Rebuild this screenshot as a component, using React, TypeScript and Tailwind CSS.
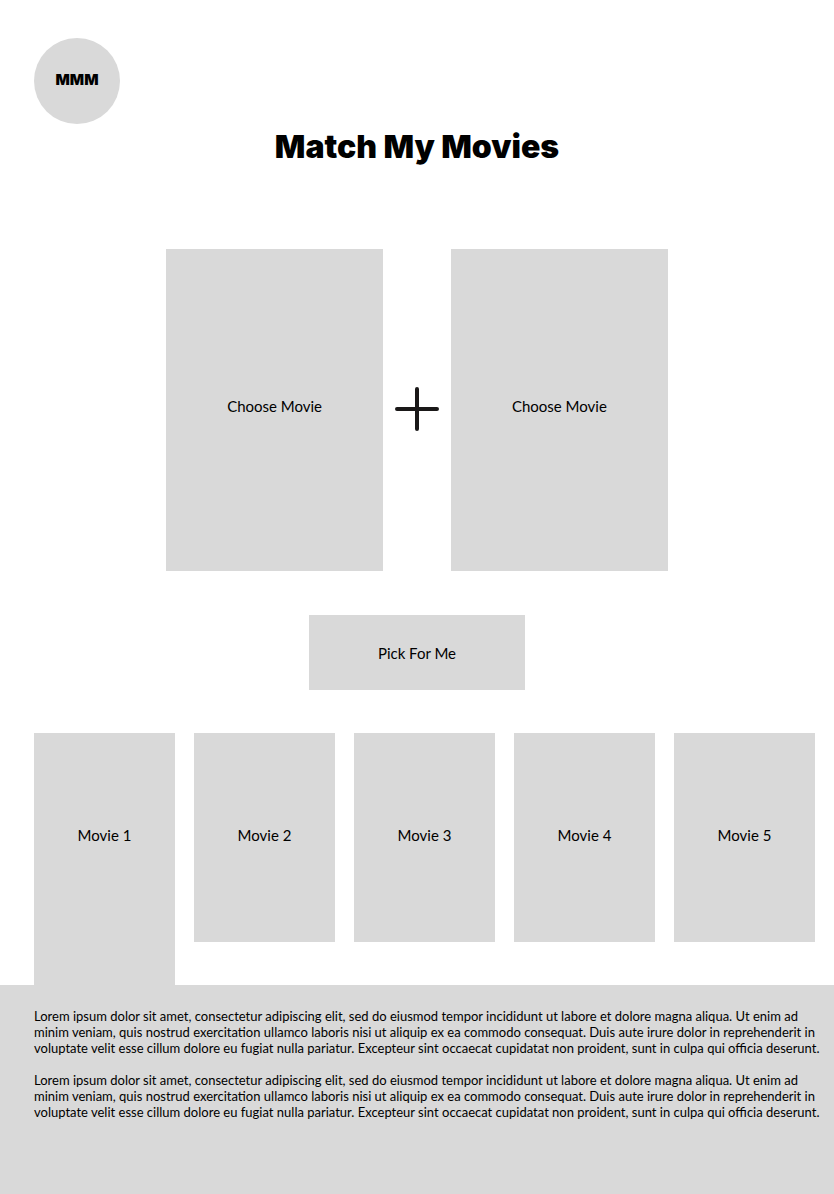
const movies = ["Movie 1", "Movie 2", "Movie 3", "Movie 4", "Movie 5"];

const blurb =
  "Lorem ipsum dolor sit amet, consectetur adipiscing elit, sed do eiusmod tempor incididunt ut labore et dolore magna aliqua. Ut enim ad minim veniam, quis nostrud exercitation ullamco laboris nisi ut aliquip ex ea commodo consequat. Duis aute irure dolor in reprehenderit in voluptate velit esse cillum dolore eu fugiat nulla pariatur. Excepteur sint occaecat cupidatat non proident, sunt in culpa qui officia deserunt.";

function ChooseCard() {
  return (
    <button
      type="button"
      className="flex h-[322px] w-[26%] items-center justify-center bg-[#d9d9d9] pb-2 text-[15px] leading-5"
    >
      Choose Movie
    </button>
  );
}

export default function App() {
  return (
    <div className="flex min-h-screen flex-col bg-white font-['Lato',sans-serif] text-black">
      <header className="flex flex-col pt-[38px] font-['Inter',sans-serif] font-black">
        <a
          href="#"
          className="ml-[34px] flex size-[86px] items-center justify-center rounded-full bg-[#d9d9d9] pb-0.5 text-[15px]"
        >
          MMM
        </a>
        <h1 className="text-center text-[32px] leading-[46px]">Match My Movies</h1>
      </header>

      <main className="flex grow flex-col">
        <section className="mt-[79px] flex items-center justify-center">
          <ChooseCard />
          <svg className="mx-3 mb-0.5 size-11 shrink-0" viewBox="0 0 44 44" fill="none" aria-hidden="true">
            <path d="M22 2v40M2 22h40" stroke="#1a1818" strokeWidth="4" strokeLinecap="round" />
          </svg>
          <ChooseCard />
        </section>

        <button
          type="button"
          className="mt-11 h-[75px] w-[26%] self-center bg-[#d9d9d9] text-[15px] leading-5"
        >
          Pick For Me
        </button>

        <ul className="mt-[43px] grid grow grid-cols-5 items-start gap-[19px] pr-[19px] pl-[34px] text-[15px] leading-5">
          {movies.map((movie) => (
            <li key={movie} className="h-[209px] bg-[#d9d9d9] pt-[92px] text-center first:h-[252px]">
              {movie}
            </li>
          ))}
        </ul>
      </main>

      <footer className="flex min-h-[209px] flex-col gap-4 bg-[#d9d9d9] pt-[23px] pr-2 pb-6 pl-[34px] text-[13px] leading-4">
        <p>{blurb}</p>
        <p>{blurb}</p>
      </footer>
    </div>
  );
}
